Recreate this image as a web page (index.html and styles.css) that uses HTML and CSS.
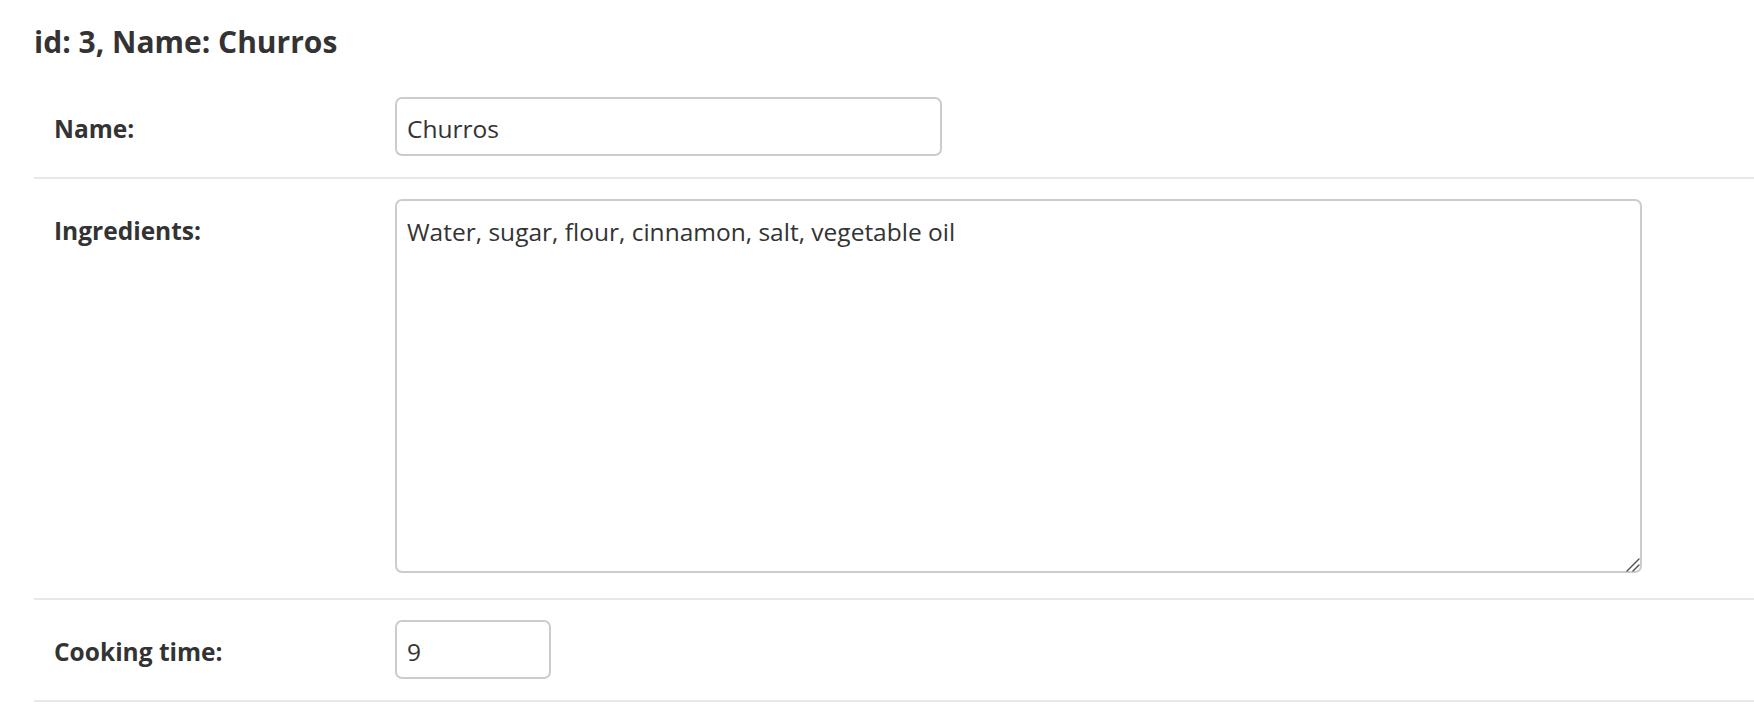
FILE: index.html
```html
<!DOCTYPE html>
<html lang="en">
<head>
<meta charset="utf-8">
<title>id: 3, Name: Churros</title>
<link rel="stylesheet" href="styles.css">
</head>
<body>
<div class="page">
  <h2 class="title">id: 3, Name: Churros</h2>
  <form class="form">
    <div class="form-row">
      <label class="field-label" for="id_name">Name:</label>
      <input class="field-input field-name" id="id_name" type="text" value="Churros">
    </div>
    <div class="form-row">
      <label class="field-label" for="id_ingredients">Ingredients:</label>
      <div class="textarea-wrap">
        <textarea class="field-textarea" id="id_ingredients">Water, sugar, flour, cinnamon, salt, vegetable oil</textarea>
        <svg class="resize-grip" width="16" height="16" viewBox="0 0 16 16" aria-hidden="true">
          <line x1="3" y1="15" x2="15" y2="3" stroke="#4d4d4d" stroke-width="1.4" stroke-linecap="round"/>
          <line x1="9" y1="15" x2="15" y2="9" stroke="#4d4d4d" stroke-width="1.4" stroke-linecap="round"/>
        </svg>
      </div>
    </div>
    <div class="form-row">
      <label class="field-label" for="id_cooking_time">Cooking time:</label>
      <input class="field-input field-time" id="id_cooking_time" type="text" value="9">
    </div>
  </form>
</div>
</body>
</html>
```

FILE: styles.css
```css
html, body {
  margin: 0;
  padding: 0;
  background: #ffffff;
}

body {
  font-family: "Open Sans", "Noto Sans", sans-serif;
  color: #333333;
}

.page {
  padding: 22px 0 0 34px;
}

.title {
  margin: 0 0 15px 0;
  font-size: 30px;
  line-height: 40px;
  font-weight: 700;
  color: #333333;
}

.form {
  display: flex;
  flex-direction: column;
}

.form-row {
  display: flex;
  align-items: flex-start;
  padding: 20px 20px 21px 20px;
  border-bottom: 2px solid #e8e8e8;
}

.field-label {
  flex: 0 0 341px;
  font-size: 24.5px;
  font-weight: 700;
  line-height: 32px;
  padding-top: 16px;
  color: #333333;
}

.field-input,
.field-textarea {
  box-sizing: border-box;
  font-family: "Open Sans", "Noto Sans", sans-serif;
  font-size: 24.5px;
  color: #333333;
  border: 2px solid #cccccc;
  border-radius: 7px;
  background: #ffffff;
  margin: 0;
  outline: none;
}

.field-input {
  height: 59px;
  padding: 3px 10px 0 10px;
}

.field-name {
  width: 547px;
}

.field-time {
  width: 156px;
}

.textarea-wrap {
  position: relative;
  width: 1247px;
  height: 374px;
  margin-bottom: 4px;
}

.field-textarea {
  display: block;
  width: 1247px;
  height: 374px;
  padding: 15px 10px 7px 10px;
  line-height: 32px;
  resize: none;
}

.resize-grip {
  position: absolute;
  right: 2px;
  bottom: 1px;
  pointer-events: none;
}
```
